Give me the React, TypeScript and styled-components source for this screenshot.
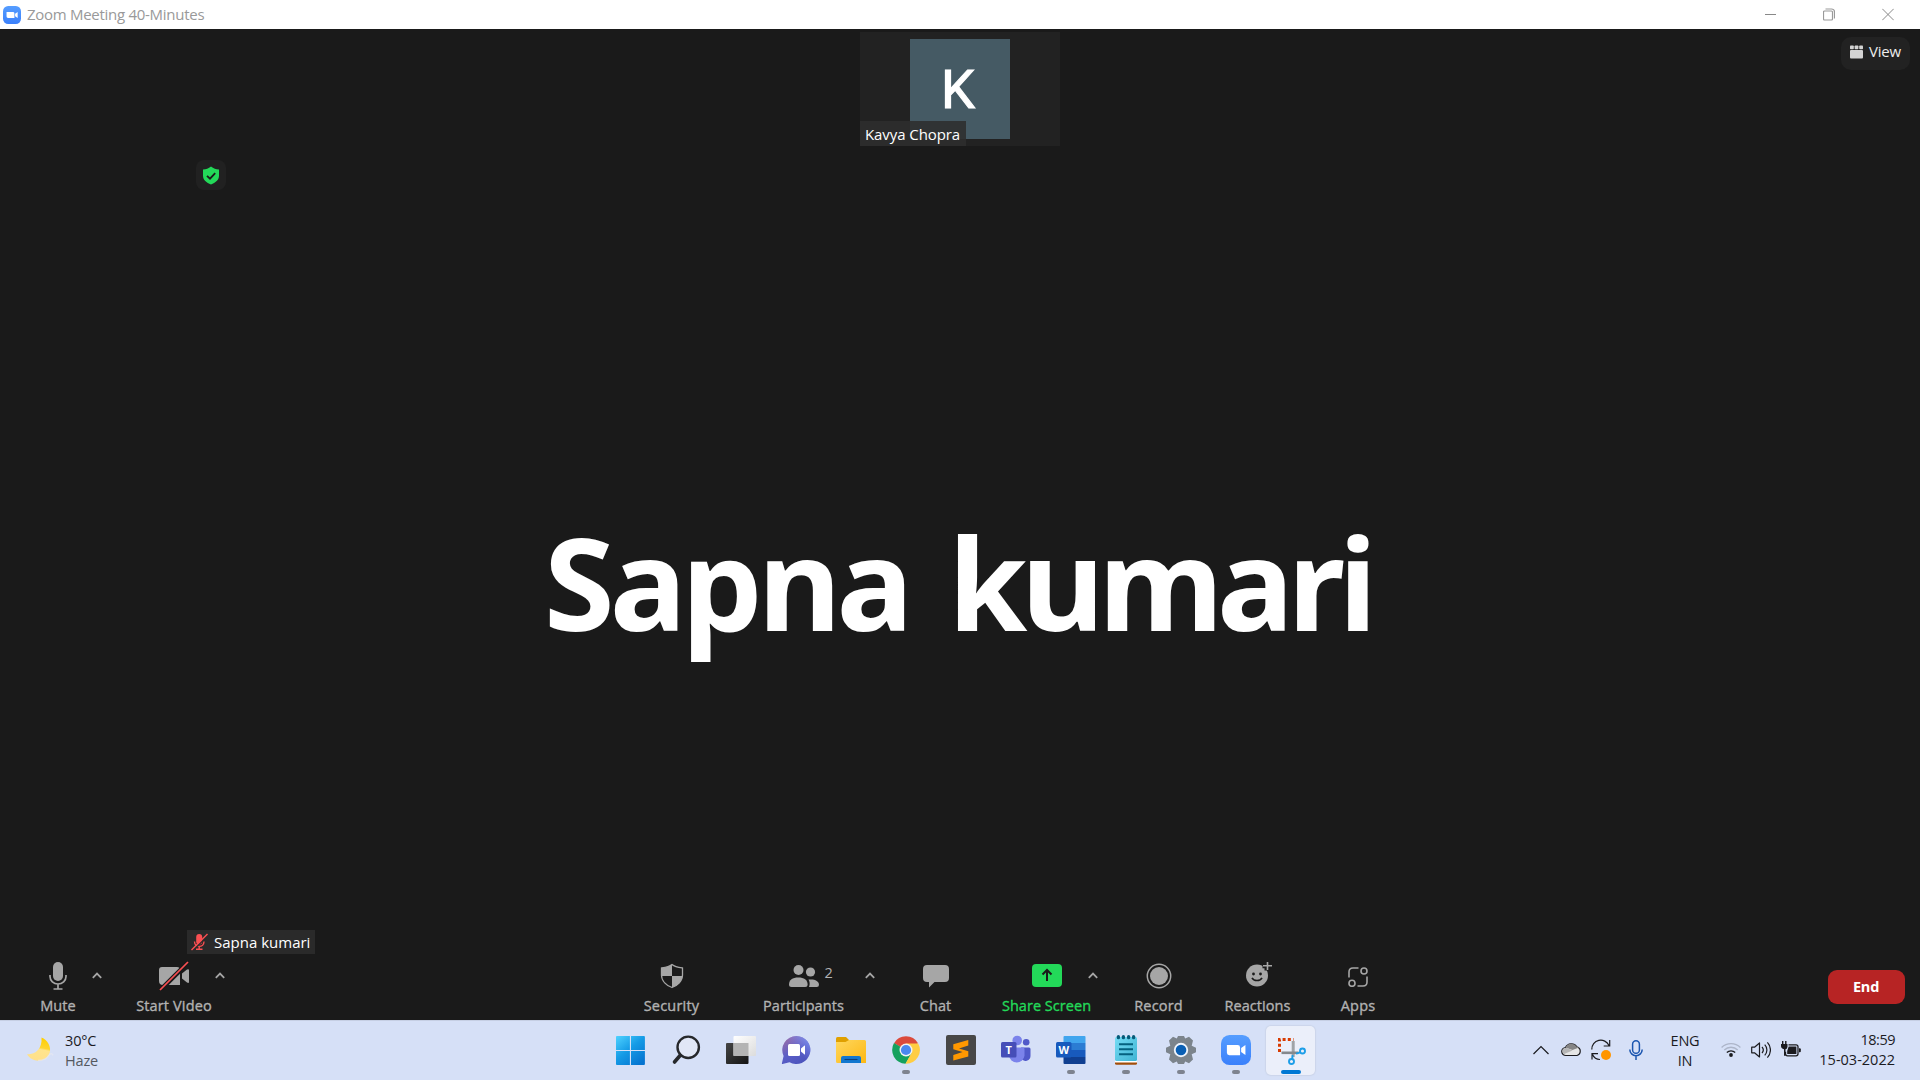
import React from "react";
import styled, { createGlobalStyle } from "styled-components";

const Global = createGlobalStyle`
  * { box-sizing: border-box; }
  body { margin: 0; overflow: hidden; background: #1a1a1a; font-family: "Open Sans", "Noto Sans", sans-serif; }
  svg { display: block; flex: none; }
`;

const Desktop = styled.div`
  width: 1920px;
  height: 1080px;
  display: grid;
  grid-template-rows: 29px 925px 66px 60px;
  background: #1a1a1a;
`;

/* ---------- title bar ---------- */
const TitleBar = styled.header`
  display: flex;
  align-items: center;
  padding: 0 26px 0 3px;
  background: #fff;
`;
const Title = styled.span`
  flex: 1;
  margin-left: 6px;
  padding-bottom: 2px;
  font-size: 15px;
  line-height: 20px;
  letter-spacing: -0.28px;
  color: #999;
`;
const WindowButtons = styled.div`
  display: flex;
  gap: 47px;
  padding-bottom: 1px;
`;

/* ---------- stage ---------- */
const Stage = styled.main`
  display: grid;
  grid-template-rows: 130px 1fr;
`;
const Strip = styled.div`
  display: grid;
  grid-template-columns: 1fr 200px 1fr;
  align-items: start;
  padding-top: 3px;
`;
const Thumb = styled.div`
  grid-column: 2;
  position: relative;
  height: 114px;
  padding-top: 7px;
  background: #222;
`;
const Avatar = styled.div`
  width: 100px;
  height: 100px;
  margin-left: 50px;
  padding: 2px 4px 0 0;
  display: flex;
  align-items: center;
  justify-content: center;
  background: #455a64;
  color: #fff;
  font: 400 54px/98px Roboto, sans-serif;
  -webkit-text-stroke: 1.1px #fff;
`;
const ThumbName = styled.div`
  position: absolute;
  left: 0;
  bottom: 0;
  height: 25px;
  padding: 1px 6px 0 5px;
  background: rgba(46, 46, 46, 0.88);
  color: #fff;
  font-size: 15px;
  line-height: 24px;
  letter-spacing: -0.08px;
  white-space: nowrap;
`;
const ViewButton = styled.button`
  justify-self: end;
  margin: 5px 10px 0 0;
  width: 69px;
  height: 33px;
  padding: 0 0 4px 9px;
  border: 0;
  border-radius: 10px;
  display: flex;
  align-items: center;
  gap: 6px;
  background: #222;
  color: #ededed;
  font: 15px/28px "Open Sans", sans-serif;
  letter-spacing: -0.2px;
`;
const ViewLabel = styled.span`
  padding-bottom: 1px;
`;
const Speaker = styled.section`
  display: flex;
  flex-direction: column;
  align-items: flex-start;
  margin: 0 187px;
`;
const Encryption = styled.div`
  width: 30px;
  height: 30px;
  margin: 1px 0 0 9px;
  display: flex;
  align-items: center;
  justify-content: center;
  border-radius: 8px;
  background: #212121;
`;
const SpeakerName = styled.h1`
  flex: 1;
  align-self: stretch;
  display: flex;
  align-items: center;
  justify-content: center;
  margin: 0;
  padding: 44px 5px 0 0;
  color: #fff;
  font: 700 128px/150px "Noto Sans", sans-serif;
  letter-spacing: -4.7px;
  word-spacing: 11px;
  white-space: pre;
`;
const Surname = styled.span`
  letter-spacing: -6.1px;
`;
const SpeakerTag = styled.div`
  display: flex;
  align-items: center;
  gap: 6px;
  height: 24px;
  padding: 0 5px 0 4px;
  background: #2a2a2a;
  color: #fff;
  font-size: 15px;
  line-height: 24px;
`;

/* ---------- meeting toolbar ---------- */
const Toolbar = styled.nav`
  display: flex;
  align-items: flex-start;
  padding: 6px 15px 0 14px;
`;
const ToolGroup = styled.div<{ $left?: number }>`
  display: flex;
  margin-left: ${(p) => p.$left ?? 0}px;
`;
const Tool = styled.div<{ $width: number; $gap?: number; $green?: boolean }>`
  width: ${(p) => p.$width}px;
  margin-left: ${(p) => p.$gap ?? 0}px;
  color: ${(p) => (p.$green ? "#23d959" : "#b2b2b2")};
  text-align: center;
`;
const ToolIcons = styled.div`
  display: grid;
  grid-template-columns: 1fr auto 1fr;
  align-items: center;
  height: 31px;
`;
const ToolSide = styled.div<{ $inset?: boolean }>`
  grid-column: 3;
  display: flex;
  align-items: center;
  justify-content: flex-end;
  padding-right: ${(p) => (p.$inset ? 1 : 0)}px;
  color: #b2b2b2;
`;
const IconSlot = styled.div`
  grid-column: 2;
`;
const Count = styled.span`
  flex: 1;
  padding-bottom: 5px;
  margin-left: 6px;
  text-align: left;
  font-size: 14.5px;
  line-height: 16px;
`;
const ToolLabel = styled.div<{ $tracking?: number }>`
  margin: 5px -20px 0;
  font-size: 14.5px;
  line-height: 20px;
  letter-spacing: ${(p) => p.$tracking ?? 0.1}px;
  -webkit-text-stroke: 0.35px currentColor;
`;
const EndButton = styled.button`
  width: 77px;
  height: 34px;
  margin: 10px 0 0 auto;
  padding: 0 1px 1px 0;
  border: 0;
  border-radius: 9px;
  background: #b72424;
  color: #fff;
  font: 700 14.5px/32px "Open Sans", sans-serif;
  letter-spacing: -0.2px;
`;

/* ---------- taskbar ---------- */
const Taskbar = styled.footer`
  display: grid;
  grid-template-columns: 603px 715px 1fr;
  background: #d6e0f7;
  box-shadow: inset 0 1px #c6cfe4;
  color: #1b1b1f;
  font-size: 14.5px;
  line-height: 20px;
`;
const Weather = styled.div`
  display: flex;
  align-items: center;
  gap: 11px;
  padding-left: 26px;
`;
const WeatherText = styled.div`
  padding-top: 1px;
  letter-spacing: -0.15px;
`;
const Muted = styled.div`
  color: #54585f;
`;
const Tasks = styled.div`
  display: flex;
  padding-top: 6px;
`;
const Task = styled.div<{ $active?: boolean }>`
  width: ${(p) => (p.$active ? 49 : 55)}px;
  margin: ${(p) => (p.$active ? "0 3px" : "0")};
  height: 49px;
  padding-top: 9px;
  display: flex;
  flex-direction: column;
  align-items: center;
  border-radius: 5px;
  background: ${(p) => (p.$active ? "#ebeffa" : "none")};
  box-shadow: ${(p) => (p.$active ? "0 0 1px 1px #ccd5ea" : "none")};
`;
const Indicator = styled.i<{ $active?: boolean }>`
  width: ${(p) => (p.$active ? 20 : 8)}px;
  height: 4px;
  margin-top: 5px;
  border-radius: 2px;
  background: ${(p) => (p.$active ? "#0078d4" : "#7e838f")};
`;
const Tray = styled.div`
  display: flex;
  align-items: center;
  justify-content: flex-end;
  padding: 0 25px 0 0;
`;
const TrayIcon = styled.div<{ $right: number }>`
  margin-right: ${(p) => p.$right}px;
`;
const Language = styled.div`
  width: 30px;
  margin-right: 21px;
  padding-top: 1px;
  text-align: center;
  letter-spacing: -0.2px;
`;
const Clock = styled.div`
  width: 76px;
  display: flex;
  flex-direction: column;
  align-items: flex-end;
  white-space: nowrap;
`;
const Time = styled.div`
  letter-spacing: -0.5px;
`;

/* ---------- icons ---------- */
const ZoomLogo = ({ size }: { size: number }) => (
  <svg width={size} height={size} viewBox="0 0 28 28">
    <defs>
      <linearGradient id="zl" x1="0" y1="0" x2="0" y2="1">
        <stop offset="0" stopColor="#559dff" />
        <stop offset="1" stopColor="#3a80fb" />
      </linearGradient>
    </defs>
    <rect width="28" height="28" rx="8" fill="url(#zl)" />
    <path d="M5.500 9.300h10q2.300 0 2.300 2.300v7.200h-10q-2.300 0-2.300-2.300zM18.800 12.200l4-2.900v9.400l-4-2.900z" fill="#fff" />
  </svg>
);
const Caret = () => (
  <svg width="10" height="7" viewBox="0 0 10 7" fill="none" stroke="#a6a6a6" strokeWidth="1.800">
    <path d="M.8 5.800 5 1.600l4.200 4.200" />
  </svg>
);
const MicIcon = () => (
  <svg width="18" height="30" viewBox="0 0 18 30" fill="none" stroke="#a6a6a6" strokeWidth="1.700">
    <rect x="4" y="1" width="10" height="19" rx="5" fill="#a6a6a6" stroke="none" />
    <path d="M1 14v1.500a8 7.500 0 0 0 16 0V14M9 23v5M4.500 28h9" />
  </svg>
);
const VideoOffIcon = () => (
  <svg width="30" height="30" viewBox="0 0 30 30">
    <path d="M3 6h15q3 0 3 3v15H4q-4 0-4-4V9q0-3 3-3zM23 12.500l5-4q2-1 2 .8v11.400q0 2-2 .8l-5-4z" fill="#a6a6a6" />
    <path d="M1 29.500 29.500 1" stroke="#1a1a1a" strokeWidth="4.500" />
    <path d="M1 29 29 1" stroke="#fa4f52" strokeWidth="1.700" />
  </svg>
);
const SecurityIcon = () => (
  <svg width="24" height="26" viewBox="0 0 24 26">
    <path d="M12 1.500C9 4 5 4.500 1.500 5v7c0 6 5 10.500 10.500 12.500C17.500 22.500 22.500 18 22.500 12V5C19 4.500 15 4 12 1.500z" fill="none" stroke="#a6a6a6" strokeWidth="1.300" />
    <path d="M12 1.500V13H1.500V5C5 4.500 9 4 12 1.500zM12 13h10.500c-.5 6-5 9.700-10.500 11.500z" fill="#a6a6a6" />
  </svg>
);
const PeopleIcon = () => (
  <svg width="30" height="24" viewBox="0 0 30 24" fill="#a6a6a6">
    <circle cx="9.500" cy="6" r="5" />
    <path d="M0 20.500C0 16 3.500 13.500 9.300 13.500s9.300 2.500 9.300 7q0 2.500-2.500 2.500H2.500Q0 23 0 20.500z" />
    <circle cx="21.500" cy="8" r="4.600" />
    <path d="M19.500 15.600c6-.7 10.500 1.200 10.500 5.200q0 2.200-2.200 2.200H20q1.500-4-.5-7.400z" />
  </svg>
);
const ChatIcon = () => (
  <svg width="26" height="24" viewBox="0 0 26 24">
    <path d="M4 1h18q4 0 4 4v9q0 4-4 4H11.500L6 23.500V18H4q-4 0-4-4V5q0-4 4-4z" fill="#a6a6a6" />
  </svg>
);
const ShareIcon = () => (
  <svg width="30" height="23" viewBox="0 0 30 23">
    <rect width="30" height="23" rx="4" fill="#23d959" />
    <path d="M15 17V7M10.500 10.500 15 6l4.500 4.500" fill="none" stroke="#1a1a1a" strokeWidth="2" />
  </svg>
);
const RecordIcon = () => (
  <svg width="26" height="26" viewBox="0 0 26 26">
    <circle cx="13" cy="13" r="11.700" fill="none" stroke="#a6a6a6" strokeWidth="1.500" />
    <circle cx="13" cy="13" r="9" fill="#a6a6a6" />
  </svg>
);
const ReactionsIcon = () => (
  <svg width="28" height="28" viewBox="-2 1.500 28 28">
    <circle cx="11" cy="15" r="11" fill="#a6a6a6" />
    <path d="M16.500 5.300h9M21 .5v9.500" stroke="#1a1a1a" strokeWidth="5" />
    <path d="M17 5.300h9M21.500 1v8.600" stroke="#a6a6a6" strokeWidth="1.600" />
    <circle cx="7.500" cy="13.500" r="1.400" fill="#1a1a1a" />
    <circle cx="14.500" cy="13.500" r="1.400" fill="#1a1a1a" />
    <path d="M6 17.300c1.800 3.600 8.200 3.600 10 0" fill="none" stroke="#1a1a1a" strokeWidth="1.600" />
  </svg>
);
const AppsIcon = () => (
  <svg width="20" height="22" viewBox="0 -2 20 22" fill="none" stroke="#a6a6a6" strokeWidth="1.600">
    <circle cx="16" cy="4" r="3" />
    <circle cx="4" cy="16.300" r="3" />
    <path d="M10.500 1H5Q1 1 1 5v5.500M9.500 19H15q4 0 4-4V9.500" />
  </svg>
);
const ShieldCheck = () => (
  <svg width="18" height="19" viewBox="0 0 18 19">
    <path d="M9 .6C6.500 2.700 4 3.300 1 3.600v6.200C1 14 4.500 17 9 18.400c4.500-1.400 8-4.400 8-8.600V3.600C14 3.300 11.500 2.700 9 .6z" fill="#23d959" />
    <path d="M5 9.800 8 12.700l5.200-5.500" fill="none" stroke="#1a1a1a" strokeWidth="1.800" />
  </svg>
);
const MutedMic = () => (
  <svg width="17" height="18" viewBox="0 0 17 18" fill="none" stroke="#fa4f52">
    <rect x="5.200" y="1" width="6" height="10.500" rx="3" fill="#fa4f52" stroke="none" />
    <path d="M3.500 8.500c0 6.500 9.500 6.500 9.500 0M8.200 13.500V16M5 16.300h6.500" strokeWidth="1.400" />
    <path d="M1.600 17.800 17 2.400" stroke="#2a2a2a" strokeWidth="1.400" />
    <path d="M.5 17 16.500 1" strokeWidth="1.500" />
  </svg>
);
const GalleryIcon = () => (
  <svg width="13" height="14" viewBox="0 0 13 14" fill="#d4d4d4">
    <rect x="0" y=".5" width="3.800" height="3.700" rx=".8" />
    <rect x="4.600" y=".5" width="3.800" height="3.700" rx=".8" />
    <rect x="9.200" y=".5" width="3.800" height="3.700" rx=".8" />
    <rect y="5" width="13" height="8.500" rx="1" />
  </svg>
);
const MoonIcon = () => (
  <svg width="28" height="28" viewBox="0 0 28 28">
    <defs>
      <linearGradient id="mo" x1=".6" y1="0" x2=".4" y2="1">
        <stop offset="0" stopColor="#ffcf00" />
        <stop offset=".42" stopColor="#ffd530" />
        <stop offset=".5" stopColor="#ffe48c" />
        <stop offset="1" stopColor="#ffe08a" />
      </linearGradient>
    </defs>
    <path d="M15.500 1.500c6 2.500 10 9 8.200 15.500-3 9-17 11-22.700 1.300 8 .5 15.500-5.300 14.500-16.800z" fill="url(#mo)" />
    <path d="M12 24.500c5 0 9-2 11-5.500 1-2 3.500-1.500 4 .5" fill="none" stroke="#e9eaf0" strokeOpacity=".6" strokeWidth="1.500" />
  </svg>
);
const WindowsIcon = () => (
  <svg width="30" height="30" viewBox="0 0 30 30">
    <defs>
      <linearGradient id="wi" x1="0" y1="0" x2=".8" y2="1">
        <stop offset="0" stopColor="#4fd2ff" />
        <stop offset=".5" stopColor="#159be6" />
        <stop offset="1" stopColor="#0574d0" />
      </linearGradient>
    </defs>
    <path d="M.9 1h13v14H0V1.900q0-.9.900-.9zM15 1h13q.9 0 .9.900v13.100H15zM0 16h13.900v14h-13q-.9 0-.9-.9zM15 16h13.900v13.100q0 .9-.9.900h-13z" fill="url(#wi)" />
  </svg>
);
const SearchIcon = () => (
  <svg width="30" height="30" viewBox="0 0 30 30">
    <circle cx="17.200" cy="12.300" r="10.700" fill="#e1e7f6" stroke="#26282b" strokeWidth="2.400" />
    <path d="M9.300 20.300 3.500 27" stroke="#26282b" strokeWidth="3.600" strokeLinecap="round" />
  </svg>
);
const TaskViewIcon = () => (
  <svg width="30" height="30" viewBox="0 0 30 30">
    <defs>
      <linearGradient id="tv" x1="0" y1="0" x2="1" y2="1">
        <stop offset="0" stopColor="#454545" />
        <stop offset="1" stopColor="#141414" />
      </linearGradient>
      <linearGradient id="tw" x1="0" y1="0" x2="1" y2="1">
        <stop offset="0" stopColor="#fff" />
        <stop offset="1" stopColor="#dcdcdc" />
      </linearGradient>
    </defs>
    <rect x="0" y="8" width="22.500" height="21" rx="1" fill="url(#tv)" />
    <rect x="7.500" y="1" width="22.500" height="20" rx="1" fill="url(#tw)" />
    <path d="M7.500 8h15v13h-15z" fill="#b4b4b4" />
  </svg>
);
const MeetIcon = () => (
  <svg width="30" height="30" viewBox="0 0 30 30">
    <defs>
      <linearGradient id="me" x1=".1" y1="0" x2=".7" y2="1">
        <stop offset="0" stopColor="#a270a5" />
        <stop offset=".55" stopColor="#5b5fc7" />
        <stop offset="1" stopColor="#4b53bc" />
      </linearGradient>
      <linearGradient id="mf" x1="0" y1="1" x2="1" y2="0">
        <stop offset=".5" stopColor="#7b83eb" stopOpacity="0" />
        <stop offset="1" stopColor="#7f9bf5" />
      </linearGradient>
    </defs>
    <path d="M15.500 1a14 14 0 1 1-7 26.200L1.500 29Q.8 29 .9 28.200L2.600 21A14 14 0 0 1 15.500 1z" fill="url(#me)" />
    <path d="M15.500 1a14 14 0 1 1-7 26.200L1.500 29Q.8 29 .9 28.200L2.600 21A14 14 0 0 1 15.500 1z" fill="url(#mf)" />
    <rect x="7" y="9" width="12" height="12" rx="1.500" fill="#fff" />
    <path d="M20 13.500l3.500-3q.5-.2.500.5v8q0 .7-.5.500l-3.500-3z" fill="#fff" />
  </svg>
);
const FolderIcon = () => (
  <svg width="30" height="30" viewBox="0 0 30 30">
    <defs>
      <linearGradient id="fo" x1="0" y1="0" x2="1" y2="1">
        <stop offset="0" stopColor="#ffd75e" />
        <stop offset="1" stopColor="#fdb813" />
      </linearGradient>
    </defs>
    <path d="M1.500 2H10l3.500 3.500V11H0V3.500Q0 2 1.500 2z" fill="#e0a000" />
    <path d="M0 7h9.500L13 5h15.500Q30 5 30 6.500V28H1.500Q0 28 0 26.500z" fill="url(#fo)" />
    <path d="M5 28v-5q0-2 2-2h16q2 0 2 2v5z" fill="#1277cf" />
    <path d="M8.500 24.500h13" stroke="#0a3f7c" strokeWidth="1.100" />
  </svg>
);
const ChromeIcon = () => (
  <svg width="30" height="30" viewBox="0 0 30 30">
    <path d="M15 15 3 8.200a13.800 13.800 0 0 1 24 0z" fill="#db4a3c" />
    <path d="M15 15 3 8.100a13.800 13.800 0 0 0 11.500 20.700L21 18z" fill="#15a15e" />
    <path d="M15 8.500h12.200A13.800 13.800 0 0 1 14.500 28.800L21 17z" fill="#ffcd42" />
    <circle cx="15" cy="15" r="6.500" fill="#f3f3f3" />
    <circle cx="15" cy="15" r="5.100" fill="#4a88f0" />
  </svg>
);
const SublimeIcon = () => (
  <svg width="30" height="30" viewBox="0 0 30 30">
    <rect width="30" height="30" rx="2" fill="#474747" />
    <path d="M22.300 5v5.600L13 13.400l9.300 2.800v5.300L7.300 25.500v-5.600l9.300-2.900-9.300-2.700V9.200z" fill="#ff9800" />
  </svg>
);
const TeamsIcon = () => (
  <svg width="30" height="30" viewBox="0 0 30 30">
    <circle cx="25.200" cy="7.200" r="3.300" fill="#5059c9" />
    <path d="M20 12.500h8q1.500 0 1.500 1.500v6.500a5 5 0 0 1-9.500 2.500z" fill="#5059c9" />
    <circle cx="16.200" cy="5.500" r="4.800" fill="#7b83eb" />
    <path d="M9 12.500h13q1.500 0 1.500 1.500v6.500a7.800 7.800 0 0 1-15.500 0z" fill="#7b83eb" />
    <rect x="0" y="7" width="15.500" height="15.500" rx="1.500" fill="#464eb8" />
    <text x="7.700" y="18.500" fill="#fff" fontFamily="Open Sans, sans-serif" fontWeight="700" fontSize="11" textAnchor="middle">T</text>
  </svg>
);
const WordIcon = () => (
  <svg width="30" height="30" viewBox="0 0 30 30">
    <path d="M8.500 1h20q1 0 1 1v6h-22V2q0-1 1-1z" fill="#41a5ee" />
    <path d="M7.500 8h22v7h-22z" fill="#2b7cd3" />
    <path d="M7.500 15h22v7h-22z" fill="#185abd" />
    <path d="M7.500 22h22v6q0 1-1 1h-20q-1 0-1-1z" fill="#103f91" />
    <rect x="0" y="7" width="15.500" height="15.500" rx="1.500" fill="#185abd" />
    <text x="7.700" y="18.500" fill="#fff" fontFamily="Open Sans, sans-serif" fontWeight="700" fontSize="11" textAnchor="middle">W</text>
  </svg>
);
const NotepadIcon = () => (
  <svg width="30" height="30" viewBox="0 0 30 30">
    <defs>
      <linearGradient id="np" x1="0" y1="0" x2="1" y2="1">
        <stop offset="0" stopColor="#76dcf5" />
        <stop offset="1" stopColor="#3fb4d3" />
      </linearGradient>
    </defs>
    <path d="M4 26h22v2.300q0 1.500-1.500 1.500h-19Q4 29.800 4 28.300z" fill="#a14e0b" />
    <path d="M4 25h22v2.500H4z" fill="#fff" />
    <rect x="4" y="2" width="22" height="24" rx="1.500" fill="url(#np)" />
    <path d="M8 9.300h14M8 14.300h14M8 19.300h14" stroke="#05617f" strokeWidth="2" />
    <g fill="#075a78">
      <rect x="5.800" y="0" width="3.200" height="4.300" rx="1.600" />
      <rect x="10.800" y="0" width="3.200" height="4.300" rx="1.600" />
      <rect x="16" y="0" width="3.200" height="4.300" rx="1.600" />
      <rect x="21" y="0" width="3.200" height="4.300" rx="1.600" />
    </g>
  </svg>
);
const SettingsIcon = () => (
  <svg width="30" height="30" viewBox="0 0 30 30">
    <path d="M7 1.800 10.800 3.400 12 1h6l1.200 2.400L23 1.800l4 3.700-1.300 5.300L30 12.800v4.400l-4.300 2L27 24.500l-4 3.700-3.800-1.600L18 29h-6l-1.200-2.400L7 28.200l-4-3.700 1.300-5.300L0 17.200v-4.400l4.300-2L3 5.500z" fill="#7c848c" />
    <circle cx="15" cy="15" r="7.200" fill="#eef3fb" />
    <circle cx="15" cy="15" r="5.300" fill="#0a5fb4" />
  </svg>
);
const SnipIcon = () => (
  <svg width="30" height="30" viewBox="-1.500 0 30 30" fill="none">
    <path d="M2 17V4.500h14" stroke="#d83b01" strokeWidth="3" strokeDasharray="3 2.200" />
    <path d="M15.700 6V22" stroke="#a0a4a8" strokeWidth="3" />
    <path d="M4 17.800h17" stroke="#85898d" strokeWidth="2.600" />
    <circle cx="25" cy="16" r="2.500" stroke="#1d9ee8" strokeWidth="1.900" />
    <circle cx="14" cy="26.500" r="2.500" stroke="#1d9ee8" strokeWidth="1.900" />
    <path d="M18.500 18.600 23 17.300M15.200 20l-.6 4" stroke="#1d9ee8" strokeWidth="1.900" />
  </svg>
);

const tasks: { icon: React.ReactNode; open?: boolean; active?: boolean }[] = [
  { icon: <WindowsIcon /> },
  { icon: <SearchIcon /> },
  { icon: <TaskViewIcon /> },
  { icon: <MeetIcon /> },
  { icon: <FolderIcon /> },
  { icon: <ChromeIcon />, open: true },
  { icon: <SublimeIcon /> },
  { icon: <TeamsIcon /> },
  { icon: <WordIcon />, open: true },
  { icon: <NotepadIcon />, open: true },
  { icon: <SettingsIcon />, open: true },
  { icon: <ZoomLogo size={30} />, open: true },
  { icon: <SnipIcon />, open: true, active: true },
];

type ToolProps = {
  label: string;
  icon: React.ReactNode;
  width: number;
  gap?: number;
  count?: number;
  caret?: boolean;
  green?: boolean;
  tracking?: number;
};
const ToolButton = ({ label, icon, width, gap, count, caret, green, tracking }: ToolProps) => (
  <Tool $width={width} $gap={gap} $green={green}>
    <ToolIcons>
      <IconSlot>{icon}</IconSlot>
      <ToolSide $inset={count !== undefined}>
        {count !== undefined && <Count>{count}</Count>}
        {caret && <Caret />}
      </ToolSide>
    </ToolIcons>
    <ToolLabel $tracking={tracking}>{label}</ToolLabel>
  </Tool>
);

export default function App() {
  return (
    <Desktop>
      <Global />
      <TitleBar>
        <ZoomLogo size={18} />
        <Title>Zoom Meeting 40-Minutes</Title>
        <WindowButtons>
          <svg width="11" height="13" viewBox="0 0 11 13"><path d="M0 6.500h11" stroke="#888" /></svg>
          <svg width="12" height="13" viewBox="0 0 12 13" fill="none" stroke="#999">
            <rect x=".5" y="3" width="9" height="9" rx="1" strokeWidth="1.200" />
            <path d="M2.500 1h6q3 0 3 3v6.500" strokeWidth="1.200" />
          </svg>
          <svg width="12" height="13" viewBox="0 0 12 13"><path d="m.3.800 11.400 11.400M11.700.800.3 12.200" stroke="#888" /></svg>
        </WindowButtons>
      </TitleBar>

      <Stage>
        <Strip>
          <Thumb>
            <Avatar>K</Avatar>
            <ThumbName>Kavya Chopra</ThumbName>
          </Thumb>
          <ViewButton><GalleryIcon /><ViewLabel>View</ViewLabel></ViewButton>
        </Strip>
        <Speaker>
          <Encryption><ShieldCheck /></Encryption>
          <SpeakerName><span>Sapna </span><Surname>kumari</Surname></SpeakerName>
          <SpeakerTag><MutedMic />Sapna kumari</SpeakerTag>
        </Speaker>
      </Stage>

      <Toolbar>
        <ToolGroup>
          <ToolButton label="Mute" icon={<MicIcon />} width={88} caret />
          <ToolButton label="Start Video" icon={<VideoOffIcon />} width={102} gap={21} caret tracking={0.15} />
        </ToolGroup>
        <ToolGroup $left={387}>
          <ToolButton label="Security" icon={<SecurityIcon />} width={119} tracking={0.2} />
          <ToolButton label="Participants" icon={<PeopleIcon />} width={145} count={2} caret tracking={0.07} />
          <ToolButton label="Chat" icon={<ChatIcon />} width={119} />
          <ToolButton label="Share Screen" icon={<ShareIcon />} width={103} caret green tracking={0.04} />
          <ToolButton label="Record" icon={<RecordIcon />} width={121} tracking={0.15} />
          <ToolButton label="Reactions" icon={<ReactionsIcon />} width={77} tracking={0.08} />
          <ToolButton label="Apps" icon={<AppsIcon />} width={124} tracking={0.2} />
        </ToolGroup>
        <EndButton>End</EndButton>
      </Toolbar>

      <Taskbar>
        <Weather>
          <MoonIcon />
          <WeatherText>
            <div>30°C</div>
            <Muted>Haze</Muted>
          </WeatherText>
        </Weather>
        <Tasks>
          {tasks.map((t, i) => (
            <Task key={i} $active={t.active}>
              {t.icon}
              {t.open && <Indicator $active={t.active} />}
            </Task>
          ))}
        </Tasks>
        <Tray>
          <TrayIcon $right={12}>
            <svg width="16" height="10" viewBox="0 0 16 10" fill="none" stroke="#1b1b1f" strokeWidth="1.200"><path d="m.5 9 7.500-7.500L15.500 9" /></svg>
          </TrayIcon>
          <TrayIcon $right={9}>
            <svg width="21" height="20" viewBox="0 0 21 20">
              <path d="M5 15.500a4 4 0 0 1-.5-8 6.500 6.500 0 0 1 11.300-.7A4.500 4.500 0 0 1 16 15.500z" fill="#e6e6e6" stroke="#1b1b1f" strokeWidth="1.200" />
              <path d="M4.500 7.500a6.500 6.500 0 0 1 11.300-.7l2.200.6-6.500 2.600z" fill="#858585" />
              <path d="M1.500 11.500a3.500 3.500 0 0 1 5.500-3l4.500 2-9 3.700z" fill="#b5b5b5" />
            </svg>
          </TrayIcon>
          <TrayIcon $right={18}>
            <svg width="20" height="22" viewBox="0 0 20 22" fill="none" stroke="#1b1b1f" strokeWidth="1.200">
              <path d="M.8 10.500A9 9 0 0 1 18 6.500M18.700 1v6h-6M9 20.500c-3 0-6-1.500-7.500-5M1 20.500v-5.800h6" />
              <circle cx="15" cy="16" r="5" fill="#ff9500" stroke="none" />
            </svg>
          </TrayIcon>
          <TrayIcon $right={27}>
            <svg width="14" height="20" viewBox="0 0 14 20" fill="none" stroke="#1a55b0" strokeWidth="1.500">
              <rect x="3.600" y=".8" width="6.800" height="12.500" rx="3.400" />
              <path d="M.8 9.500a6.200 6.200 0 0 0 12.400 0M7 16v4" />
            </svg>
          </TrayIcon>
          <Language><div>ENG</div><div>IN</div></Language>
          <TrayIcon $right={10}>
            <svg width="20" height="18" viewBox="0 0 20 18" fill="none" strokeWidth="1.300">
              <path d="M.6 6.500a13.300 13.300 0 0 1 18.800 0" stroke="#adb5c9" />
              <path d="M3.300 9a9.500 9.500 0 0 1 13.400 0" stroke="#adb5c9" />
              <path d="M5.800 11.500a6 6 0 0 1 8.400 0" stroke="#1b1b1f" />
              <circle cx="10" cy="14" r="1.900" fill="#1b1b1f" />
            </svg>
          </TrayIcon>
          <TrayIcon $right={10}>
            <svg width="20" height="18" viewBox="0 0 20 18" fill="none" stroke="#1b1b1f" strokeWidth="1.200" strokeLinejoin="round">
              <path d="M.7 6.200h2.800L8.500 2v14L3.500 11.800H.7zM11 6a4.500 4.500 0 0 1 0 6M13.700 3.700a7.500 7.500 0 0 1 0 10.600M16.400 1.400a11 11 0 0 1 0 15.200" />
            </svg>
          </TrayIcon>
          <TrayIcon $right={18}>
            <svg width="20" height="18" viewBox="0 0 20 18" fill="none" stroke="#1b1b1f">
              <path d="M7.500 3.800H15q2 0 2 2v7q0 2-2 2H6.500q-2 0-2-2v-2" strokeWidth="1.300" />
              <path d="M7.700 5.500h7.700v7.600H6.200v-3z" fill="#1b1b1f" stroke="none" />
              <path d="M18 7.300h.8q1 0 1 1v2q0 1-1 1H18z" fill="#1b1b1f" stroke="none" />
              <path d="M0 3h6.500v2.500q0 2.500-2 2.800v6.500H3V8.300Q0 7.500 0 5z" fill="#1b1b1f" stroke="none" />
              <path d="M1.700 0v3M4.800 0v3" strokeWidth="1.400" />
            </svg>
          </TrayIcon>
          <Clock><Time>18:59</Time><div>15-03-2022</div></Clock>
        </Tray>
      </Taskbar>
    </Desktop>
  );
}
